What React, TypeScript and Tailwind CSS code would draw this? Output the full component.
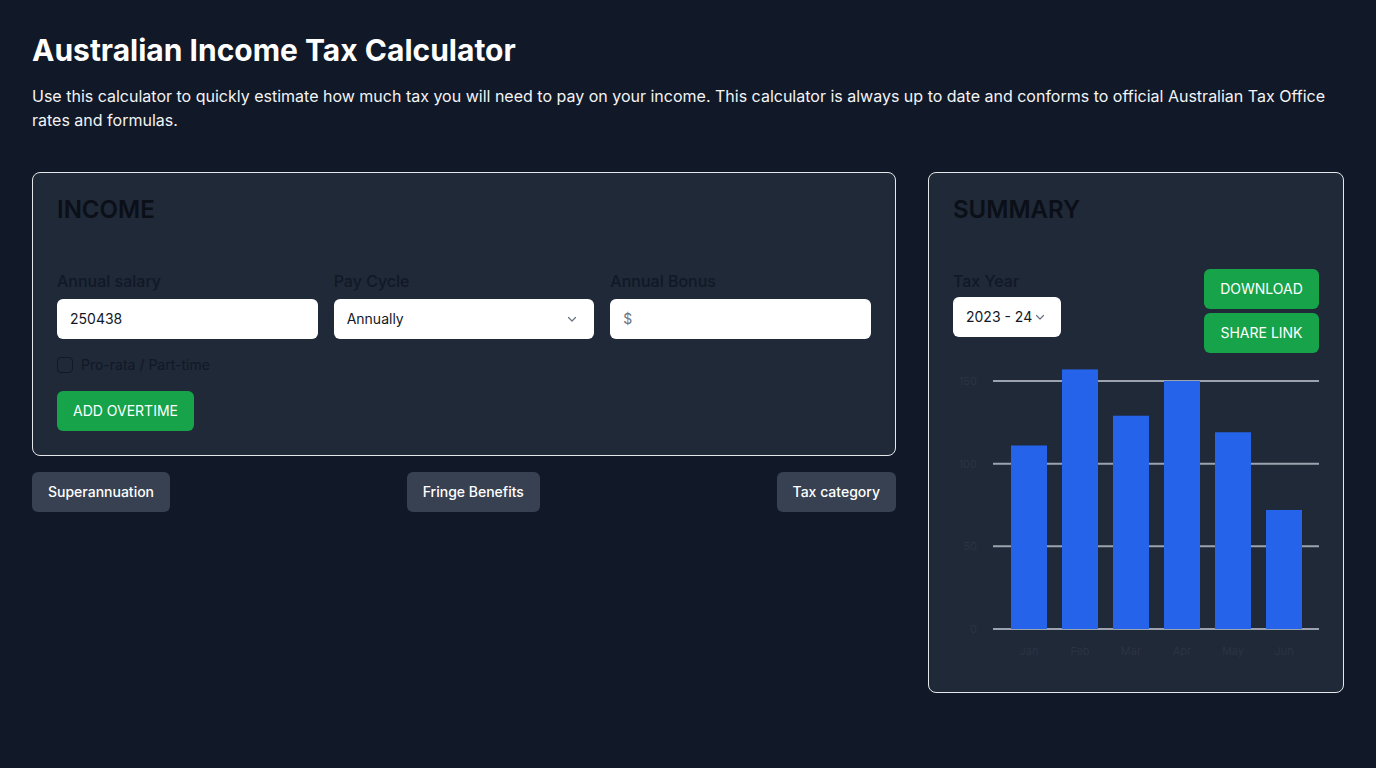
import React from "react";

const months = [
	{ label: "Jan", value: 111 },
	{ label: "Feb", value: 157 },
	{ label: "Mar", value: 129 },
	{ label: "Apr", value: 150 },
	{ label: "May", value: 119 },
	{ label: "Jun", value: 72 },
];

const Chevron = () => (
	<svg width="12" height="12" viewBox="0 0 12 12" fill="none" className="text-gray-500">
		<path d="M2.5 4.5 6 8l3.5-3.5" stroke="currentColor" strokeWidth="1.2" strokeLinecap="round" strokeLinejoin="round" />
	</svg>
);

const BarChart = () => {
	const base = 261;
	const scale = 248 / 150;
	const ticks = [0, 50, 100, 150];
	return (
		<svg width="366" height="300" className="block">
			{ticks.map((t) => {
				const y = base - t * scale;
				return (
					<g key={t}>
						<line x1="40" x2="366" y1={y} y2={y} stroke="#9ca3af" strokeWidth="2" />
						<text x="24" y={y + 4} textAnchor="end" fontSize="11" fill="#2b3443" fontFamily="Inter, sans-serif">
							{t}
						</text>
					</g>
				);
			})}
			{months.map((m, i) => {
				const x = 58 + i * 51;
				const h = m.value * scale;
				return (
					<g key={m.label}>
						<rect x={x} y={base - h} width="36" height={h} fill="#2563eb" />
						<text x={x + 18} y="287" textAnchor="middle" fontSize="11" fill="#2b3443" fontFamily="Inter, sans-serif">
							{m.label}
						</text>
					</g>
				);
			})}
		</svg>
	);
};

const App = () => {
	return (
		<div className="min-h-screen bg-[#111827] px-8 pt-8 pb-10 font-['Inter',sans-serif]">
			<h1 className="text-3xl font-bold text-white">Australian Income Tax Calculator</h1>
			<p className="mt-4 text-base leading-6 text-[#f3f4f6]">
				Use this calculator to quickly estimate how much tax you will need to pay on your income. This calculator is
				always up to date and conforms to official Australian Tax Office rates and formulas.
			</p>

			<div className="mt-10 grid grid-cols-3 gap-8 items-start">
				<div className="col-span-2">
					<div className="rounded-lg border border-[#e5e7eb] bg-[#1f2937] p-6">
						<h2 className="mb-[46px] text-2xl leading-[26px] font-semibold text-[#0b0f17]">INCOME</h2>
						<div className="grid grid-cols-3 gap-4">
							<div>
								<label className="mb-1.5 block text-base leading-6 font-medium text-[#111827]">Annual salary</label>
								<div className="flex h-10 items-center rounded-md bg-white px-[13px] text-sm text-[#111827]">250438</div>
							</div>
							<div>
								<label className="mb-1.5 block text-base leading-6 font-medium text-[#111827]">Pay Cycle</label>
								<div className="flex h-10 items-center justify-between rounded-md bg-white pl-[13px] pr-4 text-sm text-[#111827]">
									<span>Annually</span>
									<Chevron />
								</div>
							</div>
							<div>
								<label className="mb-1.5 block text-base leading-6 font-medium text-[#111827]">Annual Bonus</label>
								<div className="flex h-10 items-center rounded-md bg-white px-[13px] text-sm text-[#6b7280]">$</div>
							</div>
						</div>
						<div className="mt-4 flex items-center gap-2 text-sm leading-5 text-[#111827]">
							<span className="h-4 w-4 rounded border border-[#111827]" />
							<span>Pro-rata / Part-time</span>
						</div>
						<button className="mt-4 h-10 rounded-md bg-[#16a34a] px-4 text-sm text-white">ADD OVERTIME</button>
					</div>

					<div className="mt-4 flex justify-between">
						<button className="h-10 rounded-md bg-[#374151] px-4 text-sm font-medium text-white">Superannuation</button>
						<button className="h-10 rounded-md bg-[#374151] px-4 text-sm font-medium text-white">Fringe Benefits</button>
						<button className="h-10 rounded-md bg-[#374151] px-4 text-sm font-medium text-white">Tax category</button>
					</div>
				</div>

				<div className="rounded-lg border border-[#e5e7eb] bg-[#1f2937] p-6">
					<h2 className="mb-[46px] text-2xl leading-[26px] font-semibold text-[#0b0f17]">SUMMARY</h2>
					<div className="flex items-start justify-between">
						<div>
							<label className="mb-1 block text-base leading-6 font-medium text-[#111827]">Tax Year</label>
							<div className="flex h-10 w-[108px] items-center gap-0.5 rounded-md bg-white pl-[13px] text-sm text-[#111827]">
								<span>2023 - 24</span>
								<Chevron />
							</div>
						</div>
						<div className="flex w-[115px] flex-col gap-1">
							<button className="h-10 rounded-md bg-[#16a34a] text-sm text-white">DOWNLOAD</button>
							<button className="h-10 rounded-md bg-[#16a34a] text-sm text-white">SHARE LINK</button>
						</div>
					</div>
					<div className="mt-[15px]">
						<BarChart />
					</div>
				</div>
			</div>
		</div>
	);
};

export default App;
